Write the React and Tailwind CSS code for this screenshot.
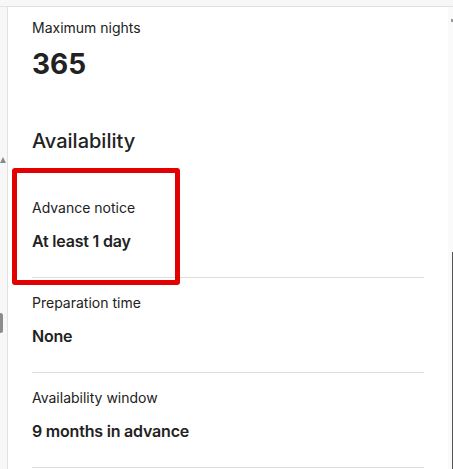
export default function App() {
  const rows = [
    { label: "Advance notice", value: "At least 1 day", highlight: true },
    { label: "Preparation time", value: "None" },
    { label: "Availability window", value: "9 months in advance" },
  ];
  return (
    <div
      className="w-[453px] h-[469px] overflow-hidden bg-white text-[#222222] flex flex-col"
      style={{ fontFamily: "Inter, 'Noto Sans', sans-serif" }}
    >
      <div className="h-[7px] shrink-0 bg-[#f7f7f7] border-b border-[#e2e2e2]" />
      <div className="flex flex-1 min-h-0">
        <div className="relative w-[8px] shrink-0 bg-[#f7f7f7] border-r border-[#e2e2e2]">
          <div className="absolute left-0 top-[150px] w-0 h-0 border-l-[3px] border-r-[3px] border-b-[6px] border-l-transparent border-r-transparent border-b-[#8a8a8a]" />
          <div className="absolute left-[-2px] top-[306px] w-[5px] h-[20px] rounded-[3px] bg-[#8c8c8c]" />
        </div>
        <div className="flex-1 px-[24px] pt-[11px] flex flex-col">
          <div className="text-[14px] leading-[20px]">Maximum nights</div>
          <div className="mt-[10px] text-[28px] leading-[32px] font-bold">365</div>
          <div className="mt-[47px] text-[20px] leading-[28px] font-medium">Availability</div>
          <div className="mt-[28px] flex flex-col">
            {rows.map((r) => (
              <div key={r.label} className="relative pt-[15px] pb-[24px] border-b border-[#dddddd] flex flex-col gap-[11px]">
                {r.highlight && (
                  <div className="absolute left-[-20px] top-[-15px] w-[168px] h-[117px] border-[5px] border-[#e20000] rounded-[3px]" />
                )}
                <div className="text-[14px] leading-[20px]">{r.label}</div>
                <div className="text-[16px] leading-[24px] font-semibold tracking-[-0.2px]">{r.value}</div>
              </div>
            ))}
          </div>
        </div>
        <div className="relative w-[5px] shrink-0 bg-[#fafafa]">
          <div className="absolute right-0 top-[12px] w-[2px] h-[3px] bg-[#999999]" />
          <div className="absolute right-0 top-[245px] w-[1px] h-[230px] bg-[#555555]" />
        </div>
      </div>
    </div>
  );
}
